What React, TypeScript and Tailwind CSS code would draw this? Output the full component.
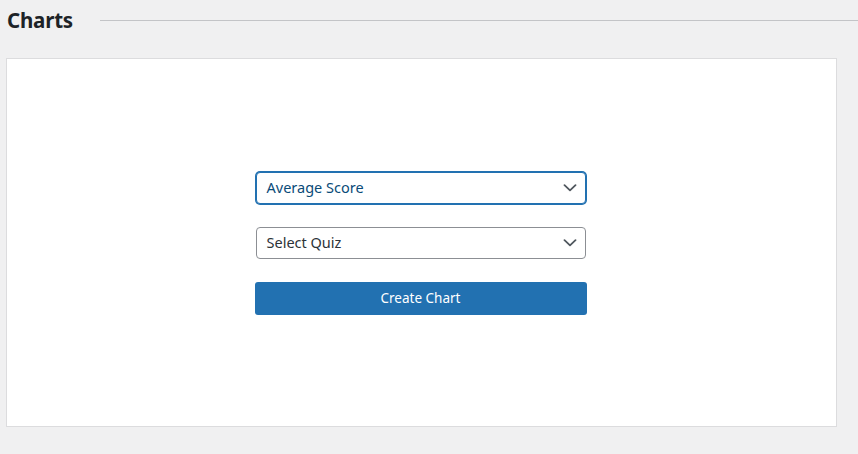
import React from "react";

function Chevron() {
  return (
    <svg width="14" height="8" viewBox="0 0 14 8" fill="none" className="shrink-0">
      <path d="M1.5 1.2 L7 6.4 L12.5 1.2" stroke="#50575e" strokeWidth="1.8" strokeLinecap="round" strokeLinejoin="round" />
    </svg>
  );
}

function FakeSelect({ label, focused }: { label: string; focused?: boolean }) {
  return (
    <div
      className={
        focused
          ? "w-[330px] h-[32px] rounded-[4px] border border-[#2271b1] shadow-[0_0_0_1px_#2271b1] bg-white flex items-center justify-between pl-[10px] pr-[8px] text-[14.5px] text-[#0a4b78]"
          : "w-[330px] h-[32px] rounded-[4px] border border-[#8c8f94] bg-white flex items-center justify-between pl-[10px] pr-[8px] text-[14.5px] text-[#2c3338]"
      }
    >
      <span className="leading-none">{label}</span>
      <Chevron />
    </div>
  );
}

export default function App() {
  return (
    <div className="w-[858px] h-[454px] overflow-hidden bg-[#f0f0f1] font-['Noto_Sans',sans-serif]">
      <div className="flex items-center h-[40px] pl-[7px]">
        <h1 className="w-[93px] text-[20.5px] font-bold leading-none text-[#1d2327] tracking-[-0.2px]">Charts</h1>
        <div className="flex-1 h-px bg-[#c3c4c7]" />
      </div>
      <div className="mt-[18px] ml-[6px] w-[831px] h-[369px] border border-[#dcdcde] bg-white flex flex-col items-center justify-center pr-[2px] pt-[1px]">
        <div className="flex flex-col items-center">
          <FakeSelect label="Average Score" focused />
          <div className="h-[23px]" />
          <FakeSelect label="Select Quiz" />
          <div className="h-[23px]" />
          <button className="w-[332px] h-[33px] rounded-[3px] bg-[#2271b1] text-white text-[13.5px] flex items-center justify-center">
            Create Chart
          </button>
        </div>
      </div>
    </div>
  );
}
